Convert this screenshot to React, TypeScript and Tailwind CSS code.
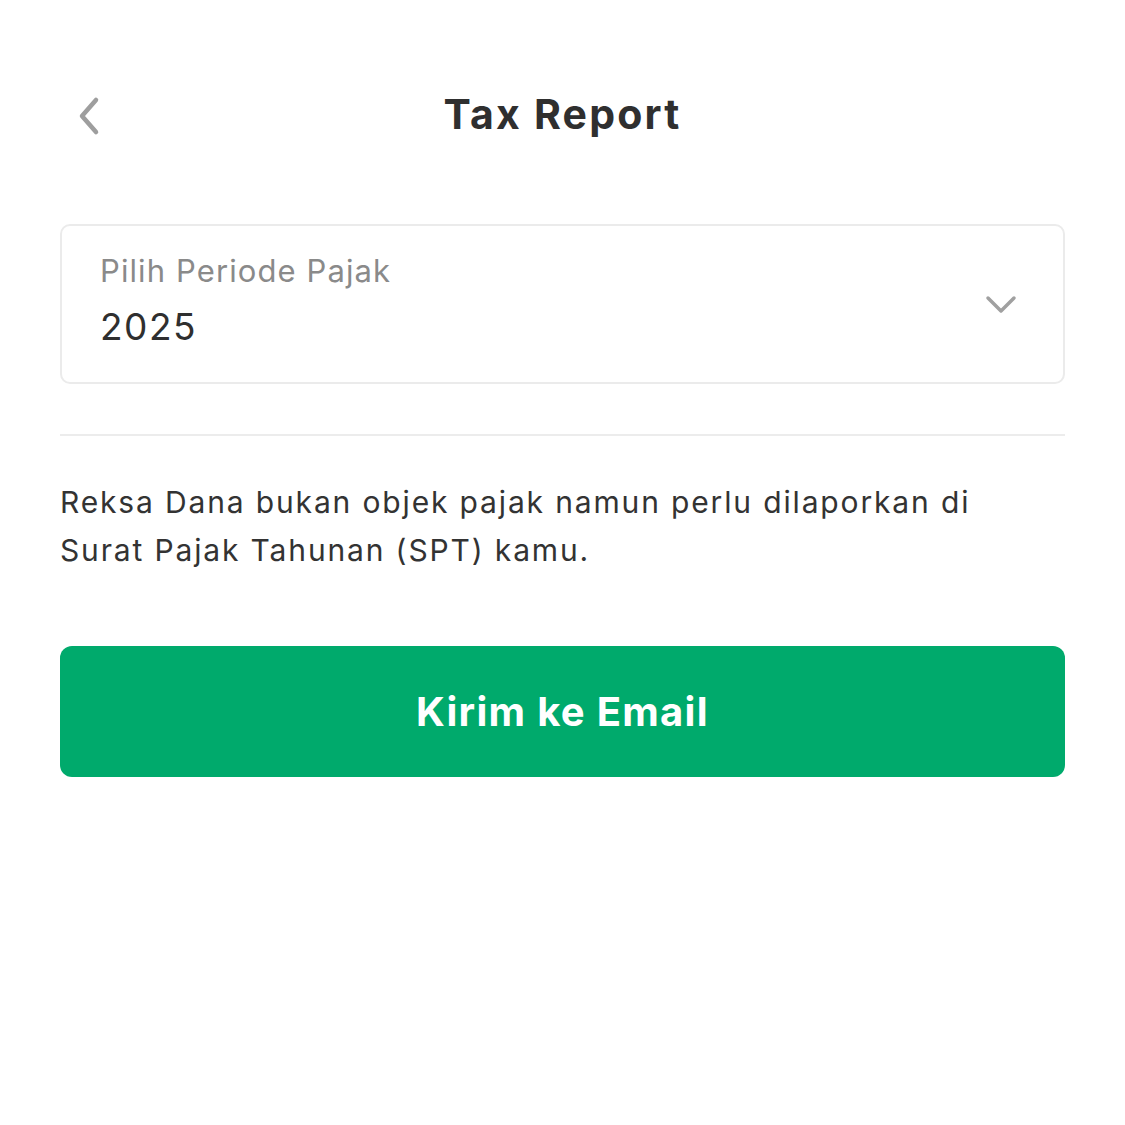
import React from "react";

export default function App() {
  return (
    <div className="w-[1125px] h-[1125px] bg-white px-[60px]" style={{ fontFamily: "Inter, 'Noto Sans', sans-serif" }}>
      <div className="relative h-[230px] pt-[88px]">
        <div className="flex items-center justify-center h-[54px]">
          <button className="absolute left-[12px] top-[96px] w-[32px] h-[40px] flex items-center justify-center">
            <svg width="28" height="40" viewBox="0 0 28 40" fill="none">
              <path d="M22 4 L8 20 L22 36" stroke="#9e9e9e" strokeWidth="4.5" strokeLinecap="round" strokeLinejoin="round" />
            </svg>
          </button>
          <h1 className="text-[41px] font-bold text-[#2f2f2f] tracking-[2.2px]">Tax Report</h1>
        </div>
      </div>
      <div className="-mt-[6px] h-[160px] border-2 border-[#ebebeb] rounded-[10px] flex items-center justify-between pl-[38px] pr-[46px]">
        <div className="flex flex-col -mt-[6px]">
          <span className="text-[31px] text-[#8a8a8a] leading-[40px] tracking-[1.1px]">Pilih Periode Pajak</span>
          <span className="text-[37px] text-[#2f2f2f] leading-[50px] mt-[11px] tracking-[1.5px]">2025</span>
        </div>
        <svg width="32" height="20" viewBox="0 0 32 20" fill="none" className="mt-[2px]">
          <path d="M3 3 L16 16 L29 3" stroke="#a0a0a0" strokeWidth="3.5" strokeLinecap="round" strokeLinejoin="round" />
        </svg>
      </div>
      <div className="mt-[50px] h-[2px] bg-[#ececec]" />
      <p className="mt-[42px] max-w-[950px] text-[30px] leading-[48px] text-[#333333] tracking-[1.85px]">
        Reksa Dana bukan objek pajak namun perlu dilaporkan di Surat Pajak Tahunan (SPT) kamu.
      </p>
      <button className="mt-[72px] w-full h-[131px] rounded-[12px] bg-[#00aa6c] flex items-center justify-center">
        <span className="text-[40px] font-bold text-white tracking-[1.3px]">Kirim ke Email</span>
      </button>
    </div>
  );
}
